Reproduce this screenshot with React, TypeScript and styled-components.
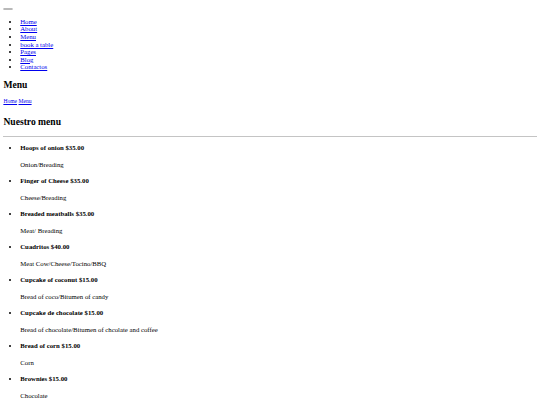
import * as React from "react";
import styled, { createGlobalStyle } from "styled-components";

// sizes are the browser defaults of a 1280px page, drawn at 540px (x 0.421875)
const GlobalStyle = createGlobalStyle`
  html, body {
    margin: 0;
    padding: 0;
    background: #ffffff;
  }
  body {
    padding: 3.375px;
    font-family: "Liberation Serif", "Times New Roman", serif;
    font-size: 6.75px;
    line-height: 7.67px;
    color: #000000;
  }
  a {
    color: #0000ee;
    text-decoration: underline;
  }
`;

const Page = styled.div`
  width: 100%;
  box-sizing: border-box;
`;

const TopBar = styled.div`
  height: 7.67px;
  display: flex;
  align-items: flex-start;
`;

const Toggler = styled.button`
  display: block;
  margin-top: 4.2px;
  width: 9.7px;
  height: 2.4px;
  padding: 0;
  border: 1px solid #b9b9b9;
  border-radius: 1px;
  background: #efefef;
`;

const NavList = styled.ul`
  margin: 6.75px 0;
  padding-left: 16.875px;
  list-style: disc;

  li {
    line-height: 7.6px;
  }
`;

const PageTitle = styled.h2`
  font-size: 9.6px;
  line-height: 11px;
  font-weight: bold;
  margin: 7.7px 0 8.2px;
`;

const Crumbs = styled.div`
  line-height: 7.67px;
  font-size: 5.625px;
  margin-bottom: 10.5px;
`;

const Rule = styled.hr`
  margin: 9.1px 0 3.375px;
  height: 0;
  border: none;
  border-top: 1px solid #c4c4c4;
`;

const MenuList = styled.ul`
  margin: 6.75px 0;
  padding-left: 16.875px;
  list-style: disc;

  li {
    line-height: 7.67px;
  }

  li:first-child h4 {
    margin-top: 7.3px;
  }
`;

const ItemName = styled.h4`
  font-size: 6.75px;
  line-height: 7.67px;
  font-weight: bold;
  margin: 8.83px 0;
`;

const ItemDesc = styled.p`
  margin: 6.75px 0;
  line-height: 7.67px;
`;

const nav = ["Home", "About", "Menu", "book a table", "Pages", "Blog", "Contactos"];

const items = [
  { name: "Hoops of onion", price: "$35.00", desc: "Onion/Breading" },
  { name: "Finger of Cheese", price: "$35.00", desc: "Cheese/Breading" },
  { name: "Breaded meatballs", price: "$35.00", desc: "Meat/ Breading" },
  { name: "Cuadritos", price: "$40.00", desc: "Meat Cow/Cheese/Tocino/BBQ" },
  { name: "Cupcake of coconut", price: "$15.00", desc: "Bread of coco/Bitumen of candy" },
  { name: "Cupcake de chocolate", price: "$15.00", desc: "Bread of chocolate/Bitumen of chcolate and coffee" },
  { name: "Bread of corn", price: "$15.00", desc: "Corn" },
  { name: "Brownies", price: "$15.00", desc: "Chocolate" },
];

export default function App() {
  return (
    <>
      <GlobalStyle />
      <Page>
        <TopBar>
          <Toggler type="button" />
        </TopBar>
        <NavList>
          {nav.map((n) => (
            <li key={n}>
              <a href="#">{n}</a>
            </li>
          ))}
        </NavList>
        <PageTitle>Menu</PageTitle>
        <Crumbs>
          <a href="#">Home</a> <a href="#">Menu</a>
        </Crumbs>
        <PageTitle>Nuestro menu</PageTitle>
        <Rule />
        <MenuList>
          {items.map((it) => (
            <li key={it.name}>
              <ItemName>
                {it.name} {it.price}
              </ItemName>
              <ItemDesc>{it.desc}</ItemDesc>
            </li>
          ))}
        </MenuList>
      </Page>
    </>
  );
}
